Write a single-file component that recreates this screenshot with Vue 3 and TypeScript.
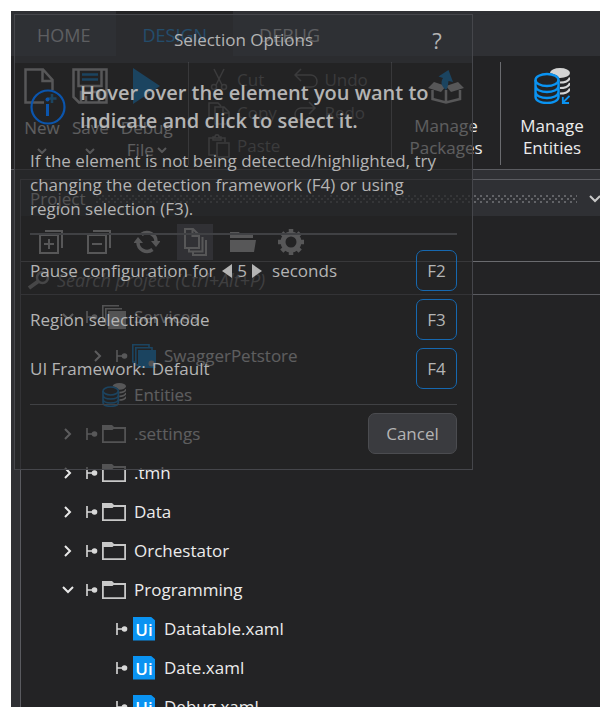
<script setup lang="ts">
import { ref } from 'vue'

type IconKind = 'services' | 'package' | 'entities' | 'folder' | 'file'

interface TreeRow {
  label: string
  level: number
  arrow: 'open' | 'closed' | 'none'
  pin: boolean
  icon: IconKind
}

const rows: TreeRow[] = [
  { label: 'Services', level: 0, arrow: 'open', pin: true, icon: 'services' },
  { label: 'SwaggerPetstore', level: 1, arrow: 'closed', pin: true, icon: 'package' },
  { label: 'Entities', level: 0, arrow: 'none', pin: false, icon: 'entities' },
  { label: '.settings', level: 0, arrow: 'closed', pin: true, icon: 'folder' },
  { label: '.tmh', level: 0, arrow: 'closed', pin: true, icon: 'folder' },
  { label: 'Data', level: 0, arrow: 'closed', pin: true, icon: 'folder' },
  { label: 'Orchestator', level: 0, arrow: 'closed', pin: true, icon: 'folder' },
  { label: 'Programming', level: 0, arrow: 'open', pin: true, icon: 'folder' },
  { label: 'Datatable.xaml', level: 1, arrow: 'none', pin: true, icon: 'file' },
  { label: 'Date.xaml', level: 1, arrow: 'none', pin: true, icon: 'file' },
  { label: 'Debug.xaml', level: 1, arrow: 'none', pin: true, icon: 'file' },
]

const search = ref('')
const seconds = ref(5)
</script>

<template>
  <div class="window">
    <nav class="tabs">
      <a href="#home" class="tab">HOME</a>
      <a href="#design" class="tab active">DESIGN</a>
      <a href="#debug" class="tab">DEBUG</a>
    </nav>

    <section class="ribbon">
      <div class="group main-group">
        <button class="big">
          <svg width="36" height="36" viewBox="0 0 36 36" fill="none" stroke="#d4d4d4" stroke-width="2.500">
            <path d="M10 34.500H1.500V1.500H19L28.500 12V22M18.500 1.500V13H28.500M1.500 34.500H20" />
            <path d="M28 26v9M23.500 30.500h9" stroke="#0a93f2" />
          </svg>
          <span>New</span>
          <svg class="drop" width="10" height="6" viewBox="0 0 10 6"><path d="M1 1l4 4 4-4" /></svg>
        </button>
        <button class="big">
          <svg width="36" height="36" viewBox="0 0 36 36" fill="none" stroke="#d4d4d4" stroke-width="2.500">
            <path d="M1.500 1.500H34.500V34.500H7L1.500 29Z" />
            <path d="M6.500 1.500V18H29.500V1.500M9 34V24H27V34M14 34V28" />
            <path d="M10 6.500H26M10 11.500H26" stroke="#0a93f2" />
          </svg>
          <span>Save</span>
          <svg class="drop" width="10" height="6" viewBox="0 0 10 6"><path d="M1 1l4 4 4-4" /></svg>
        </button>
        <button class="big">
          <svg width="36" height="36" viewBox="0 0 36 36"><path d="M4 0L31 18 4 36Z" fill="#0a93f2" /></svg>
          <span>Debug</span>
          <span class="with-drop">File
            <svg class="drop" width="10" height="6" viewBox="0 0 10 6"><path d="M1 1l4 4 4-4" /></svg>
          </span>
        </button>
      </div>

      <div class="group edit-group">
        <div class="column">
          <button class="small" disabled>
            <svg width="24" height="24" viewBox="0 0 24 24" fill="none" stroke="currentColor" stroke-width="1.500">
              <path d="M7 1L15 17M17 1L9 17" /><circle cx="7" cy="19" r="2.500" /><circle cx="17" cy="19" r="2.500" />
            </svg>Cut
          </button>
          <button class="small" disabled>
            <svg width="24" height="24" viewBox="0 0 24 24" fill="none" stroke="currentColor" stroke-width="1.500">
              <path d="M6 18H2V2H11L14 5M8 6H17L22 11V23H8ZM16 6V12H22" />
            </svg>Copy
          </button>
          <button class="small" disabled>
            <svg width="24" height="24" viewBox="0 0 24 24" fill="none" stroke="currentColor" stroke-width="1.500">
              <path d="M9 21H2V4H18V8M6 6V3H8C8 0 12 0 12 3H14V6ZM10 9H22V23H10Z" />
            </svg>Paste
          </button>
        </div>
        <div class="column">
          <button class="small" disabled>
            <svg width="24" height="24" viewBox="0 0 24 24" fill="none" stroke="currentColor" stroke-width="1.500">
              <path d="M7 1L1 7L7 13M1 7H17C25 8 25 19 17 19H9" />
            </svg>Undo
          </button>
          <button class="small" disabled>
            <svg width="24" height="24" viewBox="0 0 24 24" fill="none" stroke="currentColor" stroke-width="1.500">
              <path d="M15 1L21 7L15 13M21 7H7C-1 8-1 19 7 19H13" />
            </svg>Redo
          </button>
        </div>
      </div>

      <div class="group one">
        <button class="big wide">
          <svg width="36" height="36" viewBox="0 0 36 36">
            <path d="M18 22V34.500M4.500 22V31L18 34.500 32 31V22" fill="none" stroke="#d4d4d4" stroke-width="2.500" />
            <path d="M6 14L0 20 13 24 18 18ZM30 14L36 20 23 24 18 18Z" fill="#d4d4d4" />
            <path d="M20.500 2L25 14 20.500 13C20 16 20 20 18 22C13 18 12.500 14 15 10L10.500 8.500Z" fill="#0a93f2" />
          </svg>
          <span>Manage</span><span>Packages</span>
        </button>
      </div>

      <div class="group one">
        <button class="big wide">
          <svg width="36" height="36" viewBox="0 0 36 36" fill="none">
            <ellipse cx="26" cy="5" rx="10" ry="5" fill="#d4d4d4" />
            <path d="M26 14.500C31 14.500 35 12.500 36 9.500M26 20C31 20 35 18 36 15M26 25.500C31 25.500 35 23.500 36 20.500" stroke="#d4d4d4" stroke-width="2.200" />
            <ellipse cx="13" cy="12" rx="12.500" ry="7" fill="#232325" />
            <g stroke="#0a93f2" stroke-width="2.400">
              <ellipse cx="13" cy="12" rx="11.500" ry="6" />
              <path d="M1.500 12V29C2 37 24 37 24.500 29V12M1.500 18C2 26 24 26 24.500 18M1.500 24C2 32 24 32 24.500 24" />
              <path d="M35.500 28L29 34.500M28.800 29V35H35" stroke-width="1.800" />
            </g>
          </svg>
          <span>Manage</span><span>Entities</span>
        </button>
      </div>
    </section>

    <section class="panel">
      <header class="panel-head">
        <span>Project</span>
        <i class="grip"></i>
        <button aria-label="Panel menu">
          <svg width="12" height="8" viewBox="0 0 12 8"><path d="M1 1l5 5 5-5" fill="none" stroke="#c8c8c8" stroke-width="2" /></svg>
        </button>
      </header>

      <div class="toolbar">
        <button aria-label="Expand all">
          <svg width="24" height="24" viewBox="0 0 24 24" fill="none" stroke="#d4d4d4" stroke-width="2"><path d="M1 5H19V23H1ZM6 1H23V18M10 9V19M5 14H15" /></svg>
        </button>
        <button aria-label="Collapse all">
          <svg width="24" height="24" viewBox="0 0 24 24" fill="none" stroke="#d4d4d4" stroke-width="2"><path d="M1 5H19V23H1ZM6 1H23V18M5 14H15" /></svg>
        </button>
        <button aria-label="Refresh">
          <svg width="26" height="24" viewBox="0 0 26 24" fill="none" stroke="#d4d4d4" stroke-width="3.500">
            <path d="M7.500 4.500A9 9 0 0 1 22 12M18.500 19.500A9 9 0 0 1 4 12" />
            <path d="M-.5 13L4 7 9 13ZM17 11H26.500L22 17Z" fill="#d4d4d4" stroke="none" />
          </svg>
        </button>
        <button class="on" aria-label="Show all files">
          <svg width="24" height="28" viewBox="0 0 24 28" fill="none" stroke="#d4d4d4" stroke-width="2">
            <path d="M2 1H10L16 7V20H2ZM9.500 1V8H16M6 21V23.500H19.500V9M10 24V27H23V12" />
          </svg>
        </button>
        <button aria-label="Open folder">
          <svg width="28" height="20" viewBox="0 0 28 20" fill="#d4d4d4"><path d="M1 0H10L12 3H24V6H1ZM1 8H27L25 20H1Z" /></svg>
        </button>
        <button aria-label="Settings">
          <svg width="28" height="28" viewBox="0 0 28 28" fill="none" stroke="#d4d4d4">
            <circle cx="14" cy="14" r="8" stroke-width="5" />
            <path d="M14 1V5M14 23V27M1 14H5M23 14H27M4.800 4.800L7.600 7.600M20.400 20.400L23.200 23.200M4.800 23.200L7.600 20.400M20.400 7.600L23.200 4.800" stroke-width="4.500" />
          </svg>
        </button>
      </div>

      <label class="search">
        <svg width="24" height="20" viewBox="0 0 24 20" fill="none" stroke="#9c9c9c">
          <circle cx="15.500" cy="7.500" r="5.500" stroke-width="2.500" /><path d="M11 11.500L2 18" stroke-width="4" />
        </svg>
        <input v-model="search" type="text" aria-label="Search project" placeholder="Search project (Ctrl+Alt+P)" />
      </label>

      <ul class="tree">
        <li v-for="row in rows" :key="row.label" :class="{ nested: row.level === 1 }">
          <span class="arrow">
            <svg v-if="row.arrow === 'open'" width="12" height="8" viewBox="0 0 12 8"><path d="M1 1l5 5 5-5" /></svg>
            <svg v-else-if="row.arrow === 'closed'" width="8" height="12" viewBox="0 0 8 12"><path d="M1 1l5 5-5 5" /></svg>
          </span>
          <span class="pin">
            <svg v-if="row.pin" width="12" height="12" viewBox="0 0 12 12">
              <path d="M1 0V12M1 6H9" fill="none" stroke="#d8d8d8" stroke-width="1.600" /><circle cx="8.500" cy="6" r="2.800" fill="#d8d8d8" />
            </svg>
          </span>
          <span class="icon">
            <svg v-if="row.icon === 'folder'" width="24" height="18" viewBox="0 0 24 18">
              <path d="M0 0H10L12 2H24V18H0ZM1.800 5V16.200H22.200V4H11.500L10.500 5Z" fill="#c8c8c8" fill-rule="evenodd" />
            </svg>
            <svg v-else-if="row.icon === 'services'" width="24" height="24" viewBox="0 0 24 24">
              <path d="M.8 17V.8H17M3.800 20V3.800H20" fill="none" stroke="#c8c8c8" stroke-width="1.600" /><path d="M6 6H24V24H6Z" fill="#c8c8c8" />
            </svg>
            <svg v-else-if="row.icon === 'package'" width="24" height="24" viewBox="0 0 24 24">
              <path d="M4 18H.8V.8H17V4M7 21H3.800V3.800H20V7" fill="none" stroke="#0a93f2" stroke-width="1.600" />
              <path d="M6 6H24V24H6Z" fill="#0a93f2" /><circle cx="19.500" cy="19.500" r="3" fill="#c8c8c8" />
            </svg>
            <svg v-else-if="row.icon === 'entities'" width="24" height="24" viewBox="0 0 36 36" fill="none">
              <ellipse cx="26" cy="5" rx="10" ry="5" fill="#d4d4d4" />
              <path d="M26 14.500C31 14.500 35 12.500 36 9.500M26 20C31 20 35 18 36 15M26 25.500C31 25.500 35 23.500 36 20.500" stroke="#d4d4d4" stroke-width="2.400" />
              <ellipse cx="13" cy="12" rx="12.500" ry="7" fill="#232325" />
              <g stroke="#0a93f2" stroke-width="2.400">
                <ellipse cx="13" cy="12" rx="11.500" ry="6" />
                <path d="M1.500 12V29C2 37 24 37 24.500 29V12M1.500 18C2 26 24 26 24.500 18M1.500 24C2 32 24 32 24.500 24" />
              </g>
            </svg>
            <b v-else class="ui">Ui</b>
          </span>
          <span class="name">{{ row.label }}</span>
        </li>
      </ul>
    </section>

    <div class="dialog" role="dialog" aria-labelledby="dialog-title">
      <header class="dialog-head">
        <h2 id="dialog-title">Selection Options</h2>
        <button class="help" aria-label="Help">?</button>
      </header>
      <div class="dialog-body">
        <div class="lead">
          <svg width="36" height="36" viewBox="0 0 36 36">
            <circle cx="18" cy="18" r="16.500" fill="none" stroke="#0b55ad" stroke-width="2.200" />
            <path d="M17.500 15V27" stroke="#0b55ad" stroke-width="3" /><circle cx="17.500" cy="10.500" r="2" fill="#0b55ad" />
          </svg>
          <p>Hover over the element you want to<br />indicate and click to select it.</p>
        </div>
        <p class="hint">If the element is not being detected/highlighted, try<br />changing the detection framework (F4) or using<br />region selection (F3).</p>
        <div class="options">
          <div class="option">
            <span>Pause configuration for</span>
            <button class="step" aria-label="Fewer seconds" @click="seconds--">
              <svg width="10" height="14" viewBox="0 0 10 14"><path d="M10 0V14L0 7Z" /></svg>
            </button>
            <span>{{ seconds }}</span>
            <button class="step after" aria-label="More seconds" @click="seconds++">
              <svg width="10" height="14" viewBox="0 0 10 14"><path d="M0 0V14L10 7Z" /></svg>
            </button>
            <span>seconds</span>
            <button class="key">F2</button>
          </div>
          <div class="option"><span>Region selection mode</span><button class="key">F3</button></div>
          <div class="option"><span>UI Framework:</span><span class="value">Default</span><button class="key">F4</button></div>
        </div>
        <footer><button class="cancel">Cancel</button></footer>
      </div>
    </div>
  </div>
</template>

<style>
body {
  background: #fff;
}
</style>

<style scoped>
* {
  box-sizing: border-box;
}

.window {
  position: relative;
  height: calc(100vh - 11px);
  margin: 11px 0 0 11px;
  overflow: hidden;
  background: #2f3034;
  color: #ececec;
  font-family: 'Open Sans', 'Noto Sans', sans-serif;
  font-size: 17px;
  line-height: 22px;
}

button {
  padding: 0;
  border: 0;
  background: none;
  color: inherit;
  font: inherit;
}

svg {
  display: block;
  flex: none;
}

.tabs {
  display: flex;
  height: 45px;
}

.tab {
  display: flex;
  align-items: center;
  padding: 2px 26px 0;
  color: #d0d0d0;
  font-size: 18px;
  text-decoration: none;
}

.tab.active {
  background: #232325;
  color: #0a93f2;
}

.ribbon {
  display: flex;
  height: 114px;
  padding: 6px 0 4px;
  background: #232325;
  border-bottom: 1px solid #5a5b60;
}

.group {
  display: flex;
  flex: none;
  border-right: 1px solid #6a6b6f;
}

.group:last-child {
  width: 102px;
  border-right: 0;
}

.main-group {
  gap: 12px;
  width: 178px;
  padding-left: 13px;
}

.big {
  display: flex;
  flex-direction: column;
  align-items: center;
  align-self: flex-start;
  min-width: 36px;
  padding-top: 6px;
}

.big > svg:first-child {
  margin-bottom: 13px;
}

.big.wide > svg:first-child {
  margin-bottom: 11px;
}

.drop {
  fill: none;
  stroke: #d4d4d4;
  stroke-width: 2;
}

.big > .drop {
  margin-top: 9px;
}

.with-drop {
  display: flex;
  align-items: center;
  gap: 3px;
}

.edit-group {
  gap: 14px;
  width: 203px;
  padding: 1px 0 0 18px;
}

.column {
  display: flex;
  flex-direction: column;
}

.small {
  display: flex;
  align-items: center;
  gap: 6px;
  height: 33px;
  color: #757575;
}

.one {
  justify-content: center;
  width: 109px;
}

.panel {
  margin: 9px 0 0 9px;
  border: 1px solid #5a5b60;
  border-width: 1px 0 0 1px;
  background: #232325;
}

.panel-head {
  display: flex;
  align-items: center;
  gap: 12px;
  height: 36px;
  padding: 2px 0 0 9px;
  background: #2f3034;
  color: #c8c8c8;
}

.panel-head span {
  width: 54px;
}

.grip {
  flex: 1;
  height: 8px;
  background:
    radial-gradient(circle at 1px 1px, #626367 1px, transparent 1px) 0 0 / 6px 6px,
    radial-gradient(circle at 4px 4px, #626367 1px, transparent 1px) 0 0 / 6px 6px;
}

.panel-head button {
  width: 11px;
}

.toolbar {
  display: flex;
  gap: 12px;
  height: 46px;
  padding: 8px 0 0 12px;
  border-bottom: 1px solid #6a6b6f;
}

.toolbar button {
  display: flex;
  align-items: center;
  justify-content: center;
  width: 36px;
  height: 36px;
}

.toolbar .on {
  background: #54545e;
}

.search {
  display: flex;
  align-items: center;
  gap: 6px;
  height: 33px;
  padding: 4px 0 0 6px;
  border-bottom: 1px solid #5a5b60;
}

.search input {
  flex: 1;
  min-width: 0;
  padding: 0;
  border: 0;
  outline: 0;
  background: none;
  color: #ececec;
  font: italic 18px 'Open Sans', 'Noto Sans', sans-serif;
}

.search input::placeholder {
  color: #858585;
  opacity: 1;
}

.tree {
  margin: 0;
  padding: 2px 0 0;
  list-style: none;
}

.tree li {
  display: flex;
  align-items: center;
  height: 39px;
  padding-left: 39px;
}

.tree .nested {
  padding-left: 69px;
}

.arrow {
  display: flex;
  justify-content: center;
  width: 16px;
}

.arrow svg {
  fill: none;
  stroke: #e8e8e8;
  stroke-width: 2;
}

.pin {
  width: 12px;
  margin: 0 4px 0 10px;
}

.icon {
  display: flex;
  justify-content: center;
  width: 24px;
  margin-right: 8px;
}

.ui {
  width: 22px;
  height: 24px;
  background: #0a93f2;
  clip-path: polygon(0 0, 80% 0, 100% 16%, 100% 100%, 0 100%);
  color: #fff;
  font-size: 17px;
  font-weight: 600;
  line-height: 25px;
  text-align: center;
}

.dialog {
  position: absolute;
  top: 3px;
  left: 3px;
  width: 459px;
  border: 1px solid #45464b;
  color: #b4b4b4;
  line-height: 24px;
}

.dialog-head {
  display: flex;
  align-items: center;
  height: 48px;
  padding: 2px 29px 0;
  background: rgba(46, 48, 52, 0.71);
}

.dialog-head h2 {
  flex: 1;
  margin: 0;
  font-size: 17px;
  font-weight: 400;
  text-align: center;
}

.help {
  width: 12px;
  margin-left: -12px;
  font-size: 22px;
}

.dialog-body {
  padding: 16px 15px 15px;
  background: rgba(35, 35, 37, 0.71);
}

.lead {
  display: flex;
  align-items: center;
  gap: 14px;
}

.lead p {
  margin: 0;
  font-size: 20px;
  font-weight: 600;
  line-height: 28px;
}

.hint {
  margin: 14px 0 0;
  padding-bottom: 12px;
  border-bottom: 2px solid #404144;
}

.options {
  display: flex;
  flex-direction: column;
  gap: 8px;
  padding: 15px 0;
  border-bottom: 1px solid #404144;
}

.option {
  display: flex;
  align-items: center;
  white-space: nowrap;
}

.value {
  margin-left: 6px;
}

.key {
  width: 41px;
  height: 41px;
  margin-left: auto;
  border: 1px solid #1668b0;
  border-radius: 7px;
}

.step {
  margin: 0 5px 0 7px;
}

.step.after {
  margin: 0 10px 0 5px;
}

.step path {
  fill: #b4b4b4;
}

footer {
  display: flex;
  justify-content: flex-end;
  padding-top: 8px;
}

.cancel {
  width: 89px;
  height: 41px;
  border: 1px solid #4b4c50;
  border-radius: 7px;
  background: #3a3b3f;
}
</style>
